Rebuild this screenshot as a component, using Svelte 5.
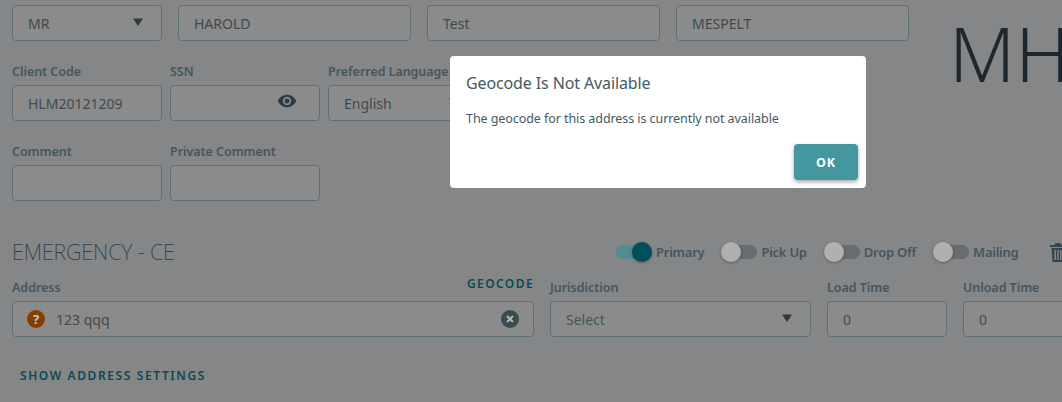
<script>
	const toggles = [
		{ label: "Primary", on: true },
		{ label: "Pick Up", on: false },
		{ label: "Drop Off", on: false },
		{ label: "Mailing", on: false },
	];
</script>

{#snippet caret()}
	<svg class="caret" width="10" height="8" viewBox="0 0 10 8"><path d="M0 .5h10L5 8z" /></svg>
{/snippet}

<div class="page">
	<div class="top">
		<div class="form">
			<div class="row names">
				<div class="box title-box"><span>MR</span>{@render caret()}</div>
				<div class="box name"><span>HAROLD</span></div>
				<div class="box name"><span>Test</span></div>
				<div class="box name"><span>MESPELT</span></div>
			</div>

			<div class="row details">
				<div class="field">
					<label>Client Code</label>
					<div class="box"><span>HLM20121209</span></div>
				</div>
				<div class="field">
					<label>SSN</label>
					<div class="box">
						<span></span>
						<svg class="eye" width="20" height="20" viewBox="0 0 24 24"><path d="M12 4.5C7 4.5 2.73 7.61 1 12c1.73 4.39 6 7.5 11 7.5s9.27-3.11 11-7.5c-1.73-4.39-6-7.5-11-7.5zM12 17c-2.76 0-5-2.24-5-5s2.24-5 5-5 5 2.24 5 5-2.24 5-5 5zm0-8c-1.66 0-3 1.34-3 3s1.34 3 3 3 3-1.34 3-3-1.34-3-3-3z" /></svg>
					</div>
				</div>
				<div class="field">
					<label>Preferred Language</label>
					<div class="box"><span>English</span>{@render caret()}</div>
				</div>
			</div>

			<div class="row details">
				<div class="field">
					<label>Comment</label>
					<div class="box"></div>
				</div>
				<div class="field">
					<label>Private Comment</label>
					<div class="box"></div>
				</div>
			</div>
		</div>
		<div class="initials">MH</div>
	</div>

	<section class="address">
		<div class="address-head">
			<h2>EMERGENCY - CE</h2>
			<div class="toggles">
				{#each toggles as t}
					<div class="toggle" class:on={t.on}>
						<span class="track"><span class="thumb"></span></span>
						<span class="toggle-label">{t.label}</span>
					</div>
				{/each}
				<svg class="trash" width="16" height="19" viewBox="0 0 16 19"><path d="M5.5 0h5l1 2H16v2H0V2h4.500zM1.500 5h13l-1 14h-11zM4.500 7v10h1.500V7zM7.250 7v10h1.500V7zM10 7v10h1.500V7z" fill-rule="evenodd" /></svg>
			</div>
		</div>

		<div class="row address-fields">
			<div class="field addr">
				<div class="label-row">
					<label>Address</label>
					<span class="link">GEOCODE</span>
				</div>
				<div class="box">
					<svg class="status" width="18" height="18" viewBox="0 0 18 18">
						<circle cx="9" cy="9" r="9" />
						<text x="9" y="13.500" text-anchor="middle">?</text>
					</svg>
					<span class="grow">123 qqq</span>
					<svg class="clear" width="18" height="18" viewBox="0 0 18 18">
						<circle cx="9" cy="9" r="9" />
						<path d="M6 6l6 6M12 6l-6 6" />
					</svg>
				</div>
			</div>
			<div class="field juris">
				<label>Jurisdiction</label>
				<div class="box"><span class="muted">Select</span>{@render caret()}</div>
			</div>
			<div class="field time">
				<label>Load Time</label>
				<div class="box"><span>0</span></div>
			</div>
			<div class="field time">
				<label>Unload Time</label>
				<div class="box"><span>0</span></div>
			</div>
		</div>

		<div class="link settings">SHOW ADDRESS SETTINGS</div>
	</section>
</div>

<div class="dialog">
	<h3>Geocode Is Not Available</h3>
	<p>The geocode for this address is currently not available</p>
	<div class="actions"><button>OK</button></div>
</div>

<style>
	:global(body) {
		overflow: hidden;
		background: #858688;
	}

	.page {
		width: 1062px;
		height: 402px;
		overflow: hidden;
		box-sizing: border-box;
		padding: 5px 0 0 12px;
		font-family: "Noto Sans", sans-serif;
		color: #26323a;
	}

	.top {
		display: flex;
		width: 1200px;
		height: 196px;
	}

	.form {
		width: 937px;
		flex: none;
	}

	.initials {
		font-size: 76px;
		font-weight: 350;
		line-height: 1;
		color: #1e272d;
		margin-top: 10px;
	}

	.row {
		display: flex;
	}

	.names {
		gap: 16px;
		margin-bottom: 22px;
	}

	.details {
		gap: 8px;
		margin-bottom: 22px;
	}

	.box {
		box-sizing: border-box;
		height: 36px;
		width: 150px;
		background: #8b8b8b;
		border: 1px solid #5f6f78;
		border-radius: 4px;
		padding: 0 15px;
		display: flex;
		align-items: center;
		justify-content: space-between;
		font-size: 14px;
		color: #3e4a50;
		white-space: nowrap;
	}

	.name {
		width: 233px;
	}

	.field label {
		display: block;
		height: 22px;
		font-size: 12.500px;
		font-weight: 600;
		letter-spacing: -0.05px;
		line-height: 18px;
		color: #46555e;
		white-space: nowrap;
	}

	.title-box .caret,
	.details .caret,
	.juris .caret {
		margin-right: 3px;
		margin-top: -2px;
	}

	.caret {
		fill: #2d3c44;
		flex: none;
	}

	.eye {
		fill: #2d3c44;
		margin-right: 7px;
		margin-top: -4px;
	}

	.address {
		width: 1200px;
		margin-top: 36px;
	}

	.address-head {
		display: flex;
		align-items: center;
		height: 30px;
	}

	h2 {
		margin: -2px 0 0;
		width: 604px;
		flex: none;
		font-size: 21.500px;
		font-weight: 200;
		letter-spacing: -0.15px;
		color: #2f3d46;
	}

	.toggles {
		display: flex;
		align-items: center;
		gap: 17px;
	}

	.toggle {
		display: flex;
		align-items: center;
		gap: 4px;
	}

	.track {
		position: relative;
		display: block;
		width: 36px;
		height: 14px;
		border-radius: 7px;
		background: #666c70;
	}

	.thumb {
		position: absolute;
		left: 0;
		top: -3px;
		width: 20px;
		height: 20px;
		border-radius: 50%;
		background: #b0b0b0;
		box-shadow: 0 1px 3px rgba(0, 0, 0, 0.3);
	}

	.toggle.on .track {
		background: #4f8f8f;
	}

	.toggle.on .thumb {
		left: auto;
		right: 0;
		background: #004f5a;
	}

	.toggle-label {
		font-size: 13px;
		font-weight: 600;
		letter-spacing: -0.25px;
		color: #46555e;
	}

	.trash {
		fill: #35454d;
		margin-left: 15px;
	}

	.address-fields {
		gap: 16px;
		margin-top: 12px;
	}

	.addr {
		width: 522px;
	}

	.addr .box {
		width: 100%;
		justify-content: flex-start;
		padding: 0 14px;
	}

	.label-row {
		display: flex;
		justify-content: space-between;
	}

	.link {
		font-size: 12px;
		font-weight: 600;
		letter-spacing: 1.400px;
		color: #0a4a50;
	}

	.label-row .link {
		margin-top: -4px;
	}

	.status {
		flex: none;
		margin-right: 11px;
	}

	.status circle {
		fill: #843e00;
	}

	.status text {
		font: 700 13px "Noto Sans", sans-serif;
		fill: #c9c9c9;
	}

	.grow {
		flex: 1;
	}

	.clear {
		flex: none;
	}

	.clear circle {
		fill: #3c4a52;
	}

	.clear path {
		stroke: #b5b5b5;
		stroke-width: 2;
		fill: none;
	}

	.juris {
		width: 261px;
	}

	.juris .box {
		width: 100%;
	}

	.muted {
		color: #46555e;
	}

	.time .box {
		width: 120px;
	}

	.settings {
		margin: 30px 0 0 8px;
		letter-spacing: 1.600px;
	}

	.dialog {
		position: fixed;
		left: 450px;
		top: 56px;
		box-sizing: border-box;
		width: 416px;
		height: 132px;
		background: #fff;
		border-radius: 4px;
		padding: 16px 8px 8px 16px;
		font-family: "Noto Sans", sans-serif;
		color: #455a64;
	}

	h3 {
		margin: 0;
		font-size: 16px;
		font-weight: 400;
		letter-spacing: -0.12px;
		line-height: 22px;
	}

	p {
		margin: 16px 0 0;
		font-size: 12.500px;
		letter-spacing: -0.07px;
		line-height: 18px;
	}

	.actions {
		display: flex;
		justify-content: flex-end;
		margin-top: 16px;
	}

	button {
		width: 64px;
		height: 36px;
		border: 0;
		border-radius: 4px;
		background: #44979f;
		color: #fff;
		font: 700 12.500px "Noto Sans", sans-serif;
		letter-spacing: 1px;
		box-shadow: 0 2px 4px rgba(0, 0, 0, 0.35);
	}
</style>
